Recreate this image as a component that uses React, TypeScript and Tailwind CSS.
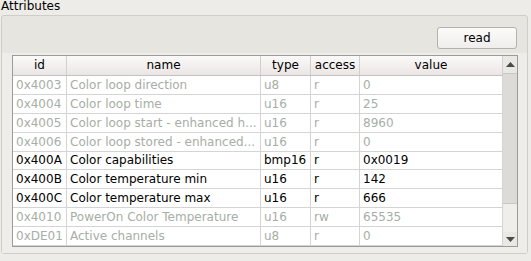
import React from 'react';

type Row = { id: string; name: string; type: string; access: string; value: string; on: boolean };

const rows: Row[] = [
  { id: '0x4003', name: 'Color loop direction', type: 'u8', access: 'r', value: '0', on: false },
  { id: '0x4004', name: 'Color loop time', type: 'u16', access: 'r', value: '25', on: false },
  { id: '0x4005', name: 'Color loop start - enhanced h...', type: 'u16', access: 'r', value: '8960', on: false },
  { id: '0x4006', name: 'Color loop stored - enhanced...', type: 'u16', access: 'r', value: '0', on: false },
  { id: '0x400A', name: 'Color capabilities', type: 'bmp16', access: 'r', value: '0x0019', on: true },
  { id: '0x400B', name: 'Color temperature min', type: 'u16', access: 'r', value: '142', on: true },
  { id: '0x400C', name: 'Color temperature max', type: 'u16', access: 'r', value: '666', on: true },
  { id: '0x4010', name: 'PowerOn Color Temperature', type: 'u16', access: 'rw', value: '65535', on: false },
  { id: '0xDE01', name: 'Active channels', type: 'u8', access: 'r', value: '0', on: false },
];

const cols = ['w-[54px]', 'w-[194px]', 'w-[50px]', 'w-[49px]', 'w-[143px]'];
const heads = ['id', 'name', 'type', 'access', 'value'];

export default function App() {
  return (
    <div className="h-[261px] w-[531px] overflow-hidden bg-[#edece8] text-[12px] leading-none text-black" style={{ fontFamily: '"DejaVu Sans", sans-serif' }}>
      <div className="h-[15px] pl-px pt-[-1px] leading-[12px]">Attributes</div>
      <div className="ml-px mr-[3px] h-[239px] rounded-[3px] border border-[#cfcdc8] bg-[#e6e5e0]">
        <div className="flex h-[37px] items-start justify-end pr-[10px] pt-[11px]">
          <button className="h-[22px] w-[80px] rounded-[3px] border border-[#b4b2ad] bg-gradient-to-b from-[#fbfbfa] to-[#efeeec] text-[12px]">
            read
          </button>
        </div>
        <div className="h-[200px] bg-[#eeede9] pl-[10px] pt-[2px]">
          <div className="flex h-[192px] w-[506px] border border-[#9c9b98] bg-white">
            <div className="flex flex-col">
              <div className="flex h-[20px] border-b border-[#c4c2bf] bg-gradient-to-b from-[#fbf9f9] to-[#ebe6e5]">
                {heads.map((h, i) => (
                  <div key={h} className={`${cols[i]} flex items-center justify-center border-r border-[#d2cfcc]`}>{h}</div>
                ))}
              </div>
              {rows.map((r) => (
                <div key={r.id} className={`flex h-[19px] border-b border-[#d4d4d4] ${r.on ? 'text-black' : 'text-[#a6aea6]'}`}>
                  {[r.id, r.name, r.type, r.access, r.value].map((c, i) => (
                    <div key={i} className={`${cols[i]} flex items-center overflow-hidden whitespace-nowrap border-r border-[#d4d4d4] pl-[3px]`}>{c}</div>
                  ))}
                </div>
              ))}
            </div>
            <div className="flex w-[14px] flex-col bg-[#e9e8e4]">
              <div className="flex h-[17px] items-center justify-center">
                <svg width="9" height="5" viewBox="0 0 9 5"><path d="M0 5 L4.5 0 L9 5 Z" fill="#4a4a4a" /></svg>
              </div>
              <div className="h-[131px] border-y border-[#c8c7c3] bg-[#dcdbd7]" />
              <div className="flex-1 bg-[#efeeea]" />
              <div className="flex h-[14px] items-center justify-center">
                <svg width="9" height="5" viewBox="0 0 9 5"><path d="M0 0 L9 0 L4.5 5 Z" fill="#4a4a4a" /></svg>
              </div>
            </div>
          </div>
        </div>
      </div>
    </div>
  );
}
